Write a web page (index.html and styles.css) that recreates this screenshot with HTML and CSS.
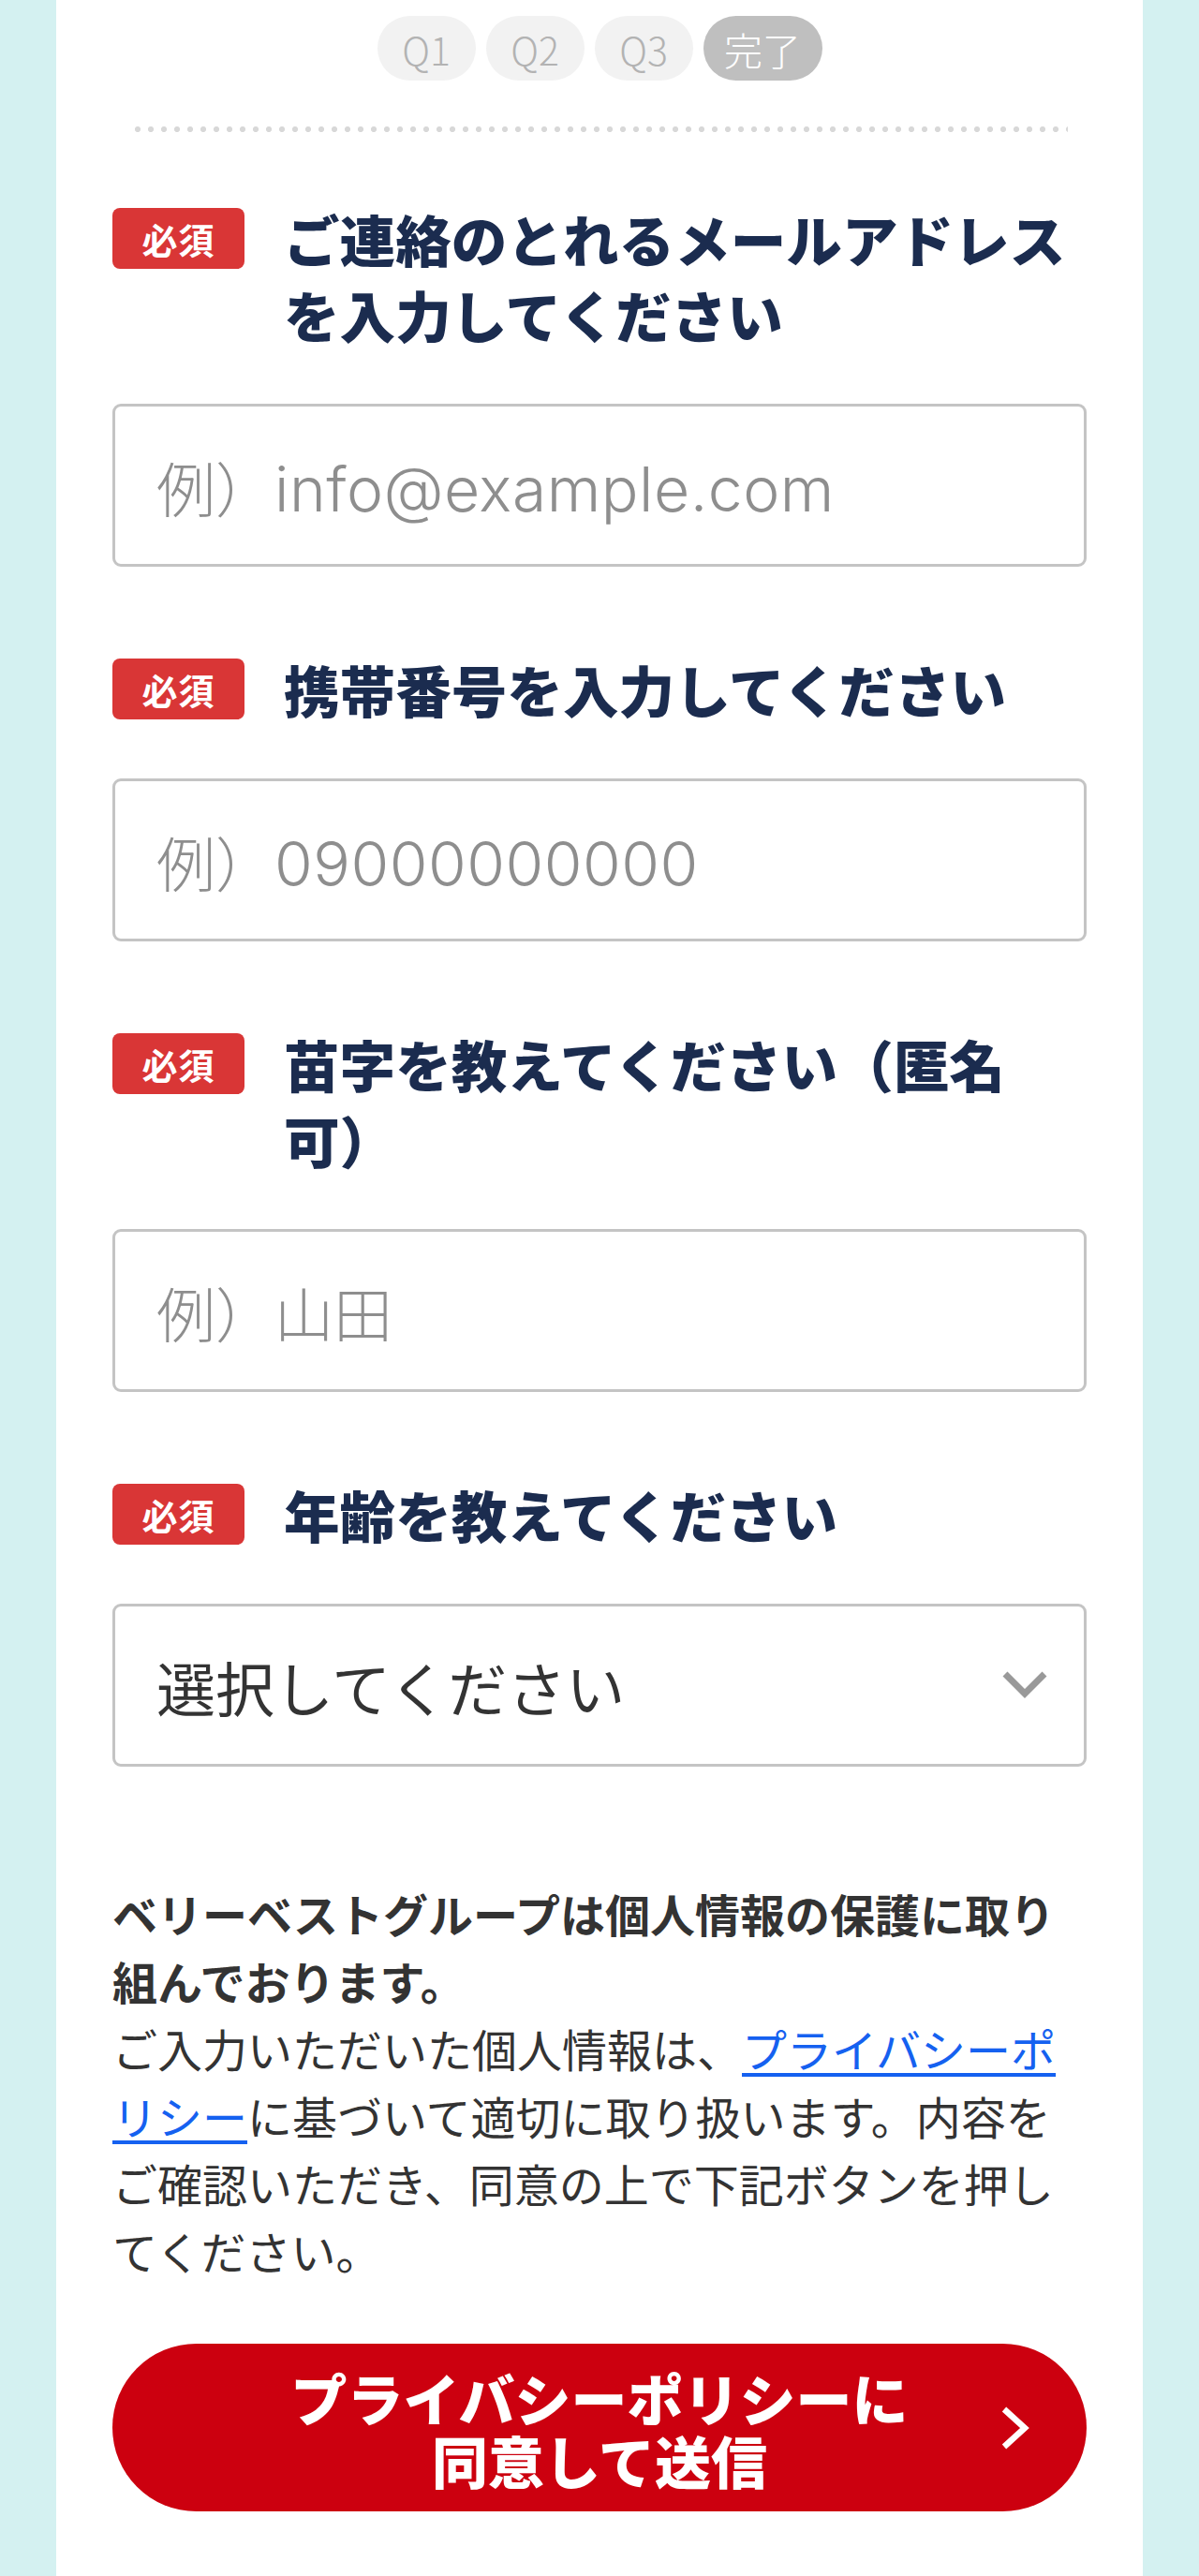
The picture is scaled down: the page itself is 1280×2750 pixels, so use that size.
FILE: index.html
```html
<!DOCTYPE html>
<html lang="ja">
<head>
<meta charset="utf-8">
<title>フォーム</title>
<link rel="stylesheet" href="styles.css">
</head>
<body>
<div class="card">
  <div class="steps">
    <span class="step">Q1</span>
    <span class="step">Q2</span>
    <span class="step">Q3</span>
    <span class="step step-done">完了</span>
  </div>
  <div class="dots"></div>

  <div class="field">
    <div class="label"><span class="badge">必須</span><span class="label-text">ご連絡のとれるメールアドレスを入力してください</span></div>
    <div class="input"><span class="placeholder">例）<span class="ph-latin">info@example.com</span></span></div>
  </div>

  <div class="field">
    <div class="label"><span class="badge">必須</span><span class="label-text">携帯番号を入力してください</span></div>
    <div class="input"><span class="placeholder">例）<span class="ph-latin">09000000000</span></span></div>
  </div>

  <div class="field">
    <div class="label"><span class="badge">必須</span><span class="label-text">苗字を教えてください（匿名可）</span></div>
    <div class="input"><span class="placeholder">例）山田</span></div>
  </div>

  <div class="field">
    <div class="label"><span class="badge">必須</span><span class="label-text">年齢を教えてください</span></div>
    <div class="input select"><span class="select-text">選択してください</span>
      <svg class="select-arrow" viewBox="0 0 50 32" width="50" height="32"><polyline points="4,4 25,25 46,4" fill="none" stroke="#999" stroke-width="7"/></svg>
    </div>
  </div>

  <div class="privacy">
    <p class="privacy-title">ベリーベストグループは個人情報の保護に取り組んでおります。</p>
    <p class="privacy-body">ご入力いただいた個人情報は、<a class="link" href="#">プライバシーポリシー</a>に基づいて適切に取り扱います。内容をご確認いただき、同意の上で下記ボタンを押してください。</p>
  </div>

  <div class="submit">
    <span class="submit-text">プライバシーポリシーに<br>同意して送信</span>
    <svg class="submit-arrow" viewBox="0 0 32 48" width="32" height="48"><polyline points="4,4 26,24 4,44" fill="none" stroke="#fff" stroke-width="6.5"/></svg>
  </div>
</div>
</body>
</html>
```

FILE: styles.css
```css
html, body {
  margin: 0;
  padding: 0;
}
body {
  background: #d4f1f1;
  font-family: "Noto Sans CJK JP", "Noto Sans", sans-serif;
}
.card {
  width: 1160px;
  margin-left: 60px;
  min-height: 2750px;
  background: #fff;
  box-sizing: border-box;
  padding: 17px 60px 0 60px;
}
.steps {
  display: flex;
  justify-content: center;
  gap: 11px;
}
.step {
  display: flex;
  align-items: center;
  justify-content: center;
  height: 69px;
  min-width: 105px;
  box-sizing: border-box;
  padding: 0 20px;
  border-radius: 35px;
  background: #f2f2f2;
  color: #b3b3b3;
  font-size: 41px;
  font-weight: 300;
}
.step-done {
  min-width: 127px;
  background: #bfbfbf;
  color: #fff;
}
.dots {
  margin: 49px 20px 0 20px;
  height: 6px;
  background-image: radial-gradient(circle, #d8d8d8 2.8px, transparent 3.2px);
  background-size: 14px 6px;
  background-repeat: repeat-x;
}
.field {
  margin-top: 73px;
}
.field + .field {
  margin-top: 90px;
}
.label {
  display: flex;
  align-items: flex-start;
  gap: 42px;
}
.badge {
  flex: none;
  display: flex;
  align-items: center;
  justify-content: center;
  width: 141px;
  height: 65px;
  margin-top: 8px;
  border-radius: 8px;
  background: #d93636;
  color: #fff;
  font-size: 38px;
  font-weight: 700;
  letter-spacing: 1px;
}
.label-text {
  flex: 1;
  color: #1b2c4f;
  font-size: 59.6px;
  line-height: 81px;
  font-weight: 900;
  text-spacing-trim: space-all;
}
.input {
  margin-top: 55px;
  height: 174px;
  box-sizing: border-box;
  border: 3px solid #c4c4c4;
  border-radius: 9px;
  padding: 0 44px;
  display: flex;
  align-items: center;
}
.placeholder {
  color: #8e8e8e;
  font-family: "Noto Sans CJK JP", sans-serif;
  font-size: 63px;
  font-weight: 300;
}
.ph-latin {
  font-family: "Inter", "Noto Sans CJK JP", sans-serif;
  font-size: 66px;
  font-weight: 300;
  letter-spacing: 0.5px;
}
.select {
  justify-content: space-between;
  padding-right: 38px;
}
.select-text {
  color: #333;
  font-size: 63px;
}
.select-arrow {
  flex: none;
}
.privacy {
  margin-top: 120px;
  color: #333;
  font-size: 48px;
  line-height: 72px;
}
.privacy p {
  margin: 0;
}
.privacy-title {
  font-weight: 700;
}
.link {
  color: #1561f0;
  text-decoration: underline;
  text-decoration-thickness: 4px;
  text-underline-offset: 6px;
}
.submit {
  position: relative;
  margin-top: 64px;
  height: 179px;
  border-radius: 90px;
  background: #cc000f;
  display: flex;
  align-items: center;
  justify-content: center;
}
.submit-text {
  color: #fff;
  font-size: 60px;
  line-height: 67px;
  font-weight: 900;
  text-align: center;
}
.submit-arrow {
  position: absolute;
  right: 60px;
  top: 66px;
}
```
